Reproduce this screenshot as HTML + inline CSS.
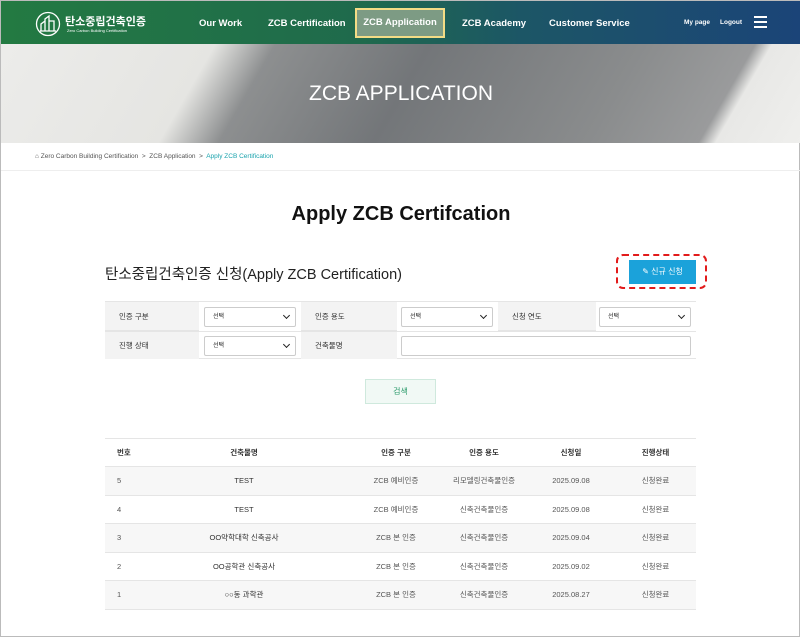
<!DOCTYPE html>
<html><head><meta charset="utf-8"><style>
*{margin:0;padding:0;box-sizing:border-box}
body{width:800px;height:637px;overflow:hidden;background:#fff;font-family:"Liberation Sans","Noto Sans CJK KR",sans-serif;color:#222;position:relative;border:1px solid #bbb}
.hdr{position:absolute;left:0;top:0;width:800px;height:43px;background:linear-gradient(90deg,#237a42 0%,#1f6a4c 45%,#1c5666 65%,#1b4478 100%);color:#fff}
.hdr .n{position:absolute;top:17px;font-size:9.5px;font-weight:bold}
.sel{position:absolute;left:354px;top:7px;width:90px;height:30px;border:2px solid #f3dc86;background:#7d9b84;font-size:9.5px;font-weight:bold;text-align:center;line-height:26px;color:#fff}
.hero{position:absolute;left:0;top:43px;width:800px;height:99px;background:linear-gradient(120deg,#ececea 0%,#e5e5e2 25%,#8d8f90 32%,#737679 50%,#8a8c8d 75%,#9a9b9c 88%,#e8e8e6 90%,#efefed 100%);overflow:hidden}
.hero h1{position:absolute;left:0;width:800px;top:38px;text-align:center;color:#fff;font-size:21px;font-weight:normal}
.bc{position:absolute;left:0;top:142px;width:800px;height:28px;border-bottom:1px solid #eee;font-size:6.5px;color:#555;padding:10px 0 0 34px}
.bc b{color:#1aa3ad;font-weight:normal}
.t1{position:absolute;left:0;width:800px;top:202px;text-align:center;font-size:20px;font-weight:bold;color:#111}
.t2{position:absolute;left:104px;top:262px;font-size:14.5px;color:#222}
.btn{position:absolute;left:628px;top:259px;width:67px;height:24px;background:#1ba2da;color:#fff;font-size:8px;text-align:center;line-height:24px}
.dash{position:absolute;left:615px;top:253px;width:91px;height:35px;border:2.5px dashed #e21b1b;border-radius:7px}
.ft{position:absolute;left:104px;top:300px;width:591px;height:58px;border-top:1px solid #e5e5e5;border-bottom:1px solid #e5e5e5}
.lb{position:absolute;background:#f3f3f3;font-size:7.5px;color:#333;padding-left:14px;line-height:29px}
.sb{position:absolute;height:20px;border:1px solid #ccc;border-radius:2px;background:#fff;font-size:6px;padding-left:8px;line-height:18px}
.sb.a:after{content:"";position:absolute;right:6px;top:5px;width:4px;height:4px;border-right:1.5px solid #222;border-bottom:1.5px solid #222;transform:rotate(45deg)}
.srch{position:absolute;left:364px;top:378px;width:71px;height:25px;border:1px solid #cfe9dd;background:#f1f9f5;color:#2a9a6a;font-size:8px;text-align:center;line-height:23px}
table{position:absolute;left:104px;top:437px;width:591px;border-collapse:collapse;table-layout:fixed;font-size:7.5px;color:#555}
th{height:28px;font-weight:bold;color:#333;border-top:1px solid #e5e5e5;border-bottom:1px solid #e5e5e5;background:#fff}
td{height:28.5px;text-align:center;border-bottom:1px solid #e5e5e5}
tr:nth-child(even) td{background:#f7f7f7}
td.l,th.l{text-align:left;padding-left:12px}
.c2{padding-right:28px}
td.b{color:#333}
</style></head><body>
<div class="hdr">
<svg style="position:absolute;left:34px;top:10px" width="26" height="26" viewBox="0 0 26 26" fill="none" stroke="#fff" stroke-width="1.3"><circle cx="13" cy="13" r="11.5"/><path d="M6 20V13l4-3v10M10 20V8l4-3v15M14 20V10h5v10M5 20h16"/></svg>
<div style="position:absolute;left:64px;top:12px;font-size:11px;font-weight:bold">탄소중립건축인증</div>
<div style="position:absolute;left:66px;top:27px;font-size:4px">Zero Carbon Building Certification</div>
<div class="n" style="left:198px">Our Work</div>
<div class="n" style="left:267px">ZCB Certification</div>
<div class="sel">ZCB Application</div>
<div class="n" style="left:461px">ZCB Academy</div>
<div class="n" style="left:548px">Customer Service</div>
<div class="n" style="left:683px;top:18px;font-size:6.5px">My page</div>
<div class="n" style="left:719px;top:18px;font-size:6.5px">Logout</div>
<div style="position:absolute;left:753px;top:15px;width:13px;height:2px;background:#fff;box-shadow:0 5px 0 #fff,0 10px 0 #fff"></div>
</div>
<div class="hero"><h1>ZCB APPLICATION</h1></div>
<div class="bc">⌂ Zero Carbon Building Certification &nbsp;&gt;&nbsp; ZCB Application &nbsp;&gt;&nbsp; <b>Apply ZCB Certification</b></div>
<div class="t1">Apply ZCB Certifcation</div>
<div class="t2">탄소중립건축인증 신청(Apply ZCB Certification)</div>
<div class="btn">✎ 신규 신청</div>
<div class="dash"></div>
<div class="ft">
<div class="lb" style="left:0;top:0;width:94px;height:29px;border-bottom:1px solid #e5e5e5">인증 구분</div>
<div class="sb a" style="left:99px;top:5px;width:92px">선택</div>
<div class="lb" style="left:196px;top:0;width:96px;height:29px;border-bottom:1px solid #e5e5e5">인증 용도</div>
<div class="sb a" style="left:296px;top:5px;width:92px">선택</div>
<div class="lb" style="left:393px;top:0;width:98px;height:29px;border-bottom:1px solid #e5e5e5">신청 연도</div>
<div class="sb a" style="left:494px;top:5px;width:92px">선택</div>
<div class="lb" style="left:0;top:29px;width:94px;height:28px">진행 상태</div>
<div class="sb a" style="left:99px;top:34px;width:92px">선택</div>
<div class="lb" style="left:196px;top:29px;width:96px;height:28px">건축물명</div>
<div class="sb" style="left:296px;top:34px;width:290px"></div>
<div style="position:absolute;left:0;top:29px;width:591px;border-top:1px solid #e5e5e5"></div>
</div>
<div class="srch">검색</div>
<table>
<colgroup><col style="width:60px"><col style="width:186px"><col style="width:90px"><col style="width:86px"><col style="width:88px"><col style="width:81px"></colgroup>
<tr><th class="l">번호</th><th class="c2">건축물명</th><th>인증 구분</th><th>인증 용도</th><th>신청일</th><th>진행상태</th></tr>
<tr><td class="l">5</td><td class="b c2">TEST</td><td>ZCB 예비인증</td><td>리모델링건축물인증</td><td>2025.09.08</td><td>신청완료</td></tr>
<tr><td class="l">4</td><td class="b c2">TEST</td><td>ZCB 예비인증</td><td>신축건축물인증</td><td>2025.09.08</td><td>신청완료</td></tr>
<tr><td class="l">3</td><td class="b c2">OO약학대학 신축공사</td><td>ZCB 본 인증</td><td>신축건축물인증</td><td>2025.09.04</td><td>신청완료</td></tr>
<tr><td class="l">2</td><td class="b c2">OO공학관 신축공사</td><td>ZCB 본 인증</td><td>신축건축물인증</td><td>2025.09.02</td><td>신청완료</td></tr>
<tr><td class="l">1</td><td class="b c2">○○동 과학관</td><td>ZCB 본 인증</td><td>신축건축물인증</td><td>2025.08.27</td><td>신청완료</td></tr>
</table>
</body></html>
